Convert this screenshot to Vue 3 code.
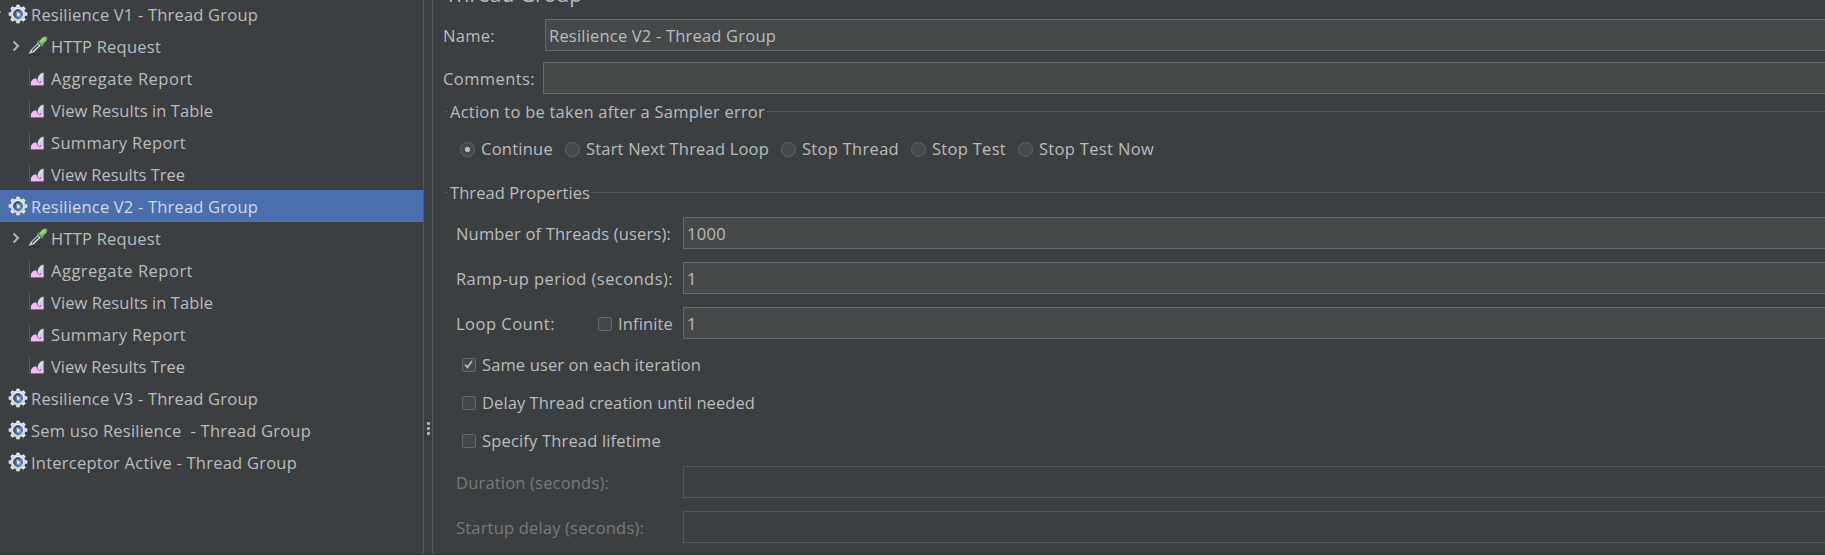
<script setup>
const tree = [
  { kind: 'gear', text: 'Resilience V1 - Thread Group', w: 227, cut: true },
  { kind: 'pipette', text: 'HTTP Request', w: 110 },
  { kind: 'chart', text: 'Aggregate Report', w: 142 },
  { kind: 'chart', text: 'View Results in Table', w: 162 },
  { kind: 'chart', text: 'Summary Report', w: 135 },
  { kind: 'chart', text: 'View Results Tree', w: 134 },
  { kind: 'gear', text: 'Resilience V2 - Thread Group', w: 227, selected: true },
  { kind: 'pipette', text: 'HTTP Request', w: 110 },
  { kind: 'chart', text: 'Aggregate Report', w: 142 },
  { kind: 'chart', text: 'View Results in Table', w: 162 },
  { kind: 'chart', text: 'Summary Report', w: 135 },
  { kind: 'chart', text: 'View Results Tree', w: 134 },
  { kind: 'gear', text: 'Resilience V3 - Thread Group', w: 227 },
  { kind: 'gear', text: 'Sem uso Resilience  - Thread Group', w: 280 },
  { kind: 'gear', text: 'Interceptor Active - Thread Group', w: 266 },
]
const radios = [
  { text: 'Continue', w: 72, on: true },
  { text: 'Start Next Thread Loop', w: 183 },
  { text: 'Stop Thread', w: 97 },
  { text: 'Stop Test', w: 74 },
  { text: 'Stop Test Now', w: 115 },
]
const checks = [
  { text: 'Same user on each iteration', w: 219, on: true },
  { text: 'Delay Thread creation until needed', w: 273 },
  { text: 'Specify Thread lifetime', w: 179 },
]

// Tracks a label out (or in) so that its advance equals the given width.
const vFit = {
  mounted(el, { value }) {
    const apply = () => {
      el.style.letterSpacing = '0px'
      const natural = el.getBoundingClientRect().width
      el.style.letterSpacing = (value - natural) / el.textContent.length + 'px'
    }
    apply()
    document.fonts.ready.then(apply)
  },
}
</script>

<template>
  <div class="app">
    <svg class="defs" width="0" height="0">
      <defs>
        <radialGradient id="hub" cx="0.62" cy="0.62" r="0.65">
          <stop offset="0" stop-color="#a9c1e6" />
          <stop offset="0.45" stop-color="#5f80ba" />
          <stop offset="1" stop-color="#1f3570" />
        </radialGradient>
        <linearGradient id="metal" x1="0" y1="0" x2="0" y2="1">
          <stop offset="0" stop-color="#f4f7f8" />
          <stop offset="1" stop-color="#c3cfd6" />
        </linearGradient>
        <linearGradient id="peak" x1="0" y1="0" x2="1" y2="1">
          <stop offset="0" stop-color="#f3f7fb" />
          <stop offset="1" stop-color="#a9bfe0" />
        </linearGradient>
      </defs>
    </svg>

    <aside class="tree">
      <div v-for="(n, i) in tree" :key="i" class="node" :class="[n.kind, { selected: n.selected }]">
        <span v-if="n.cut" class="cut"></span>
        <svg v-if="n.kind === 'pipette'" class="chev" width="8" height="12" viewBox="0 0 8 12">
          <path d="M1.5 1.5 L6 6 L1.5 10.5" fill="none" stroke="#b0b3b4" stroke-width="2" />
        </svg>
        <svg v-if="n.kind === 'gear'" class="icon" width="20" height="20" viewBox="-10 -10 20 20">
          <g fill="url(#metal)">
            <circle r="7.4" />
            <path v-for="a in 8" :key="a" d="M-2.2 -6 L-1.6 -9.3 H1.6 L2.2 -6 Z" :transform="`rotate(${a * 45})`" />
          </g>
          <circle r="4.5" fill="url(#hub)" stroke="#405788" stroke-width="0.8" />
          <path d="M-1.4 -2.4 L2.4 0.2 L-0.8 2.2 Z" fill="#e6eefa" />
        </svg>
        <svg v-else-if="n.kind === 'pipette'" class="icon" width="20" height="20" viewBox="0 0 20 20">
          <path d="M2 18.6 H13" stroke="#2c2f30" stroke-width="1" />
          <path d="M1 17.8 L2.8 14 L10 6.8 L12.8 9.6 L5.6 16.2 Z" fill="#dfe4e2" stroke="#8e9693" stroke-width="0.6" />
          <path d="M4 15.2 L10.4 8.9" stroke="#2f3a38" stroke-width="1.6" />
          <path d="M4.6 15.8 L11.4 9.4" stroke="#f2f5f3" stroke-width="0.8" />
          <path d="M9.2 4.8 L15 10.2" stroke="#4d8a3a" stroke-width="2.4" />
          <path d="M10.6 5.8 L14.4 1.6 Q17.2 -0.4 18.8 1.2 Q20 3.2 18 5.2 L14 9 Z" fill="#83bf62" />
          <path d="M13 5.2 L16.6 2.2" stroke="#b8de9e" stroke-width="1.4" />
        </svg>
        <svg v-else class="icon" width="17" height="18" viewBox="0 0 17 18">
          <path d="M1.5 0 V16.5 H16" fill="none" stroke="#5b5e61" stroke-width="1" />
          <path d="M9.4 15 V11 Q10 5 15.6 3.4 V15 Z" fill="url(#peak)" />
          <path d="M3 16.2 V12.6 Q5.4 9 8 9.2 L10.2 12.6 L11.8 14 L13.2 11.8 L15.6 13.2 V16.2 Z" fill="#f5b9f0" />
          <path d="M8.2 9.4 L10.4 12.6 L11.8 14.2 L13.2 11.8" fill="none" stroke="#7c62a8" stroke-width="0.9" />
        </svg>
        <span v-fit="n.w" class="label">{{ n.text }}</span>
      </div>
    </aside>

    <div class="divider"><i></i><i></i><i></i></div>

    <main class="panel">
      <h1 class="title"><span v-fit="137">Thread Group</span></h1>

      <div class="row name">
        <label><span v-fit="52">Name:</span></label>
        <div class="field"><span v-fit="227">Resilience V2 - Thread Group</span></div>
      </div>
      <div class="row comments">
        <label><span v-fit="92">Comments:</span></label>
        <div class="field"></div>
      </div>

      <div class="legend action"><span v-fit="315">Action to be taken after a Sampler error</span></div>
      <div class="radios">
        <div v-for="r in radios" :key="r.text" class="option">
          <span class="radio" :class="{ on: r.on }"></span><span v-fit="r.w">{{ r.text }}</span>
        </div>
      </div>

      <div class="legend props"><span v-fit="140">Thread Properties</span></div>
      <div class="row prop">
        <label><span v-fit="215">Number of Threads (users):</span></label>
        <div class="field"><span v-fit="39">1000</span></div>
      </div>
      <div class="row prop">
        <label><span v-fit="217">Ramp-up period (seconds):</span></label>
        <div class="field"><span>1</span></div>
      </div>
      <div class="row prop">
        <label class="loop">
          <span v-fit="99">Loop Count:</span>
          <span class="option"><span class="box"></span><span v-fit="55">Infinite</span></span>
        </label>
        <div class="field"><span>1</span></div>
      </div>

      <div class="checks">
        <div v-for="c in checks" :key="c.text" class="option">
          <span class="box">
            <svg v-if="c.on" width="13" height="13" viewBox="0 0 13 13">
              <path d="M3 6.6 L5.4 9.4 L10 3" fill="none" stroke="#b4b6b7" stroke-width="1.9" />
            </svg>
          </span>
          <span v-fit="c.w">{{ c.text }}</span>
        </div>
      </div>

      <div class="row prop off">
        <label><span v-fit="153">Duration (seconds):</span></label>
        <div class="field"></div>
      </div>
      <div class="row prop off">
        <label><span v-fit="188">Startup delay (seconds):</span></label>
        <div class="field"></div>
      </div>
    </main>
  </div>
</template>

<style>
body {
  background: #3c3f41;
  overflow: hidden;
}
</style>

<style scoped>
.app {
  box-sizing: border-box;
  display: flex;
  width: 1825px;
  height: 555px;
  overflow: hidden;
  background: #3c3f41;
  border-bottom: 1px solid #323537;
  color: #bbbcbd;
  font: 16.5px/20px "Open Sans", "Noto Sans", sans-serif;
  white-space: pre;
}
.app * { box-sizing: border-box; }
.defs { position: absolute; }
.app svg { display: block; flex: none; }

.tree { width: 423px; flex: none; margin-top: -2px; }
.node {
  position: relative;
  display: flex;
  align-items: center;
  height: 32px;
}
.node.gear { padding-left: 8px; }
.node.gear .icon { margin-right: 3px; }
.node.pipette { padding-left: 12px; }
.node.pipette .icon { margin: 0 3px 0 8px; }
.node.chart { padding-left: 28px; }
.node.chart .icon { margin-right: 6px; }
.node .label { padding-top: 1px; }
.selected { background: #4b6eaf; color: #d3dae6; }
.cut {
  position: absolute;
  left: 0;
  top: 13px;
  width: 1px;
  height: 2px;
  background: #85888a;
}

.divider {
  display: flex;
  flex: none;
  flex-direction: column;
  align-items: center;
  gap: 2px;
  width: 10px;
  padding-top: 422px;
  border-left: 1px solid #55585a;
  border-right: 1px solid #55585a;
}
.divider i { width: 3px; height: 3px; border-radius: 1px; background: #b4b6b7; }

.panel { flex: 1; min-width: 0; padding-left: 10px; }
.title {
  margin: -21px 0 0 2px;
  height: 40px;
  font-size: 21px;
  font-weight: 400;
  line-height: 30px;
}
.row { display: flex; align-items: center; height: 32px; }
.row label { flex: none; }
.field {
  display: flex;
  flex: 1;
  align-items: center;
  height: 32px;
  padding: 2px 0 0 3px;
  background: #45494a;
  border: 1px solid #666a6a;
  border-right: 0;
}
.row label { padding-top: 2px; }
.name label { width: 102px; }
.comments { margin-top: 11px; }
.comments label { width: 100px; }

.legend {
  display: flex;
  align-items: center;
  height: 20px;
  margin-left: 2px;
}
.legend::before { content: ""; width: 3px; height: 1px; margin-right: 2px; background: #55585a; }
.legend::after { content: ""; flex: 1; height: 1px; margin-left: 1px; background: #55585a; }
.legend span { padding-top: 1px; }
.action { margin-top: 7px; }
.props { margin-top: 27px; }

.radios { display: flex; height: 34px; padding: 18px 0 0 17px; }
.option { display: flex; align-items: center; height: 20px; }
.radios .option { margin-right: 12px; }
.radio {
  width: 15px;
  height: 15px;
  margin: 0 6px 0 0;
  border: 1px solid #64686a;
  border-radius: 50%;
  background: #45494a;
}
.radio.on { background: radial-gradient(circle, #b9bbbc 0 2.2px, #45494a 3px); }

.prop { margin: 13px 0 0 13px; }
.props + .prop { margin-top: 15px; }
.prop label { width: 227px; }
.loop { display: flex; }
.loop .option { margin-left: 43px; }
.box {
  width: 14px;
  height: 14px;
  margin-right: 6px;
  border: 1px solid #66696b;
  border-radius: 2px;
  background: #43474a;
}
.box svg { margin: -1px 0 0 -1px; }

.checks {
  display: flex;
  flex-direction: column;
  gap: 18px;
  padding: 16px 0 0 19px;
  height: 114px;
}
.off { color: #777a7c; }
.off .field { background: transparent; border-color: #55585a; }
</style>
